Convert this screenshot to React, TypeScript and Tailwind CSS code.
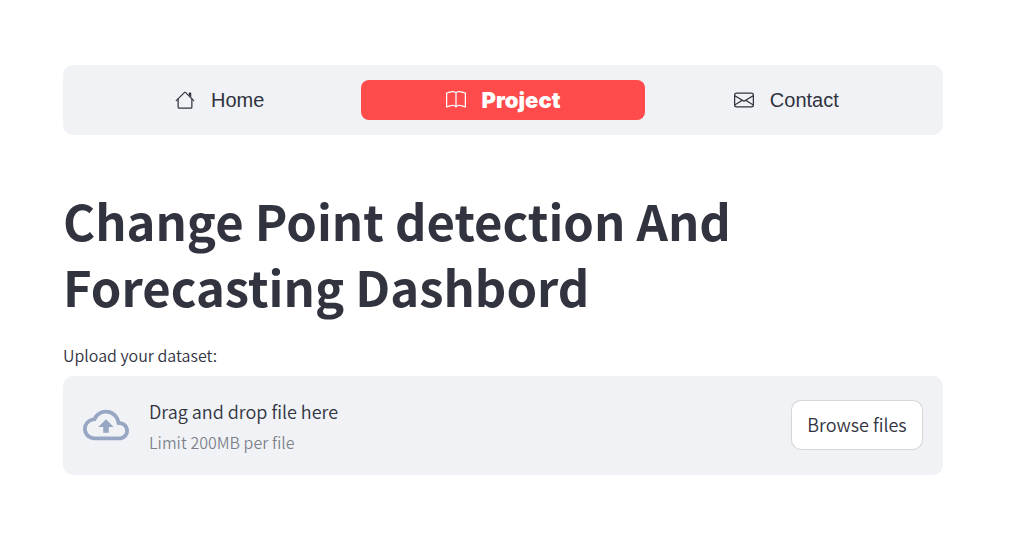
import { useRef } from 'react'
import { BsBook, BsEnvelope } from 'react-icons/bs'
import { MdOutlineCloudUpload } from 'react-icons/md'

function HouseIcon({ className }: { className?: string }) {
  return (
    <svg viewBox="0 0 16 16" fill="currentColor" fillRule="evenodd" className={className} aria-hidden="true">
      <path d="M2 13.5V7h1v6.5a.5.5 0 0 0 .5.5h9a.5.5 0 0 0 .5-.5V7h1v6.5a1.5 1.5 0 0 1-1.5 1.5h-9A1.5 1.5 0 0 1 2 13.5zm11-11V6l-2-2V2.5a.5.5 0 0 1 .5-.5h1a.5.5 0 0 1 .5.5z" />
      <path d="M7.293 1.5a1 1 0 0 1 1.414 0l6.647 6.646a.5.5 0 0 1-.708.708L8 2.207 1.354 8.854a.5.5 0 1 1-.708-.708L7.293 1.5z" />
    </svg>
  )
}

const items = [
  { label: 'Home', Icon: HouseIcon, active: false },
  { label: 'Project', Icon: BsBook, active: true },
  { label: 'Contact', Icon: BsEnvelope, active: false },
]

function NavMenu() {
  return (
    <nav className="rounded-[10px] bg-[#f0f2f6] p-[15px] font-['Liberation_Sans',Arial,sans-serif]">
      <ul className="grid grid-cols-3">
        {items.map(({ label, Icon, active }) => (
          <li key={label}>
            <a
              href={`#${label.toLowerCase()}`}
              aria-current={active ? 'page' : undefined}
              className={
                active
                  ? "flex h-10 items-center justify-center gap-4 rounded-lg bg-[#ff4b4b] font-['Inter',sans-serif] text-[22px] font-black text-white"
                  : 'flex h-10 items-center justify-center gap-4 rounded-lg text-xl text-[#31333f]'
              }
            >
              <Icon className="size-5 shrink-0" />
              {label}
            </a>
          </li>
        ))}
      </ul>
    </nav>
  )
}

function FileUploader() {
  const input = useRef<HTMLInputElement>(null)
  return (
    <div className="font-[350]">
      <label htmlFor="dataset" className="block text-base leading-6">
        Upload your dataset:
      </label>
      <section className="mt-[9px] flex items-center rounded-[10px] bg-[#f0f2f6] px-5 pt-4 pb-[18px]">
        <MdOutlineCloudUpload className="mr-5 size-[46px] shrink-0 text-[#97a6c3]" />
        <div className="mr-auto flex flex-col pt-1">
          <span className="text-lg leading-[31px]">Drag and drop file here</span>
          <small className="text-base leading-[30px] text-[#31333f]/60">Limit 200MB per file</small>
        </div>
        <input ref={input} id="dataset" type="file" className="hidden" />
        <button
          type="button"
          onClick={() => input.current?.click()}
          className="h-[50px] min-w-[132px] rounded-[10px] border border-[#31333f]/20 bg-white px-[15px] pb-0.5 text-lg"
        >
          Browse files
        </button>
      </section>
    </div>
  )
}

export default function App() {
  return (
    <main className="min-h-screen bg-white pt-[65px] pr-[70px] pb-16 pl-[63px] font-['Noto_Sans_CJK_SC',sans-serif] text-[#31333f]">
      <NavMenu />
      <h1 className="mt-[52px] mb-6 max-w-[760px] text-[49px] leading-[66px] font-bold">
        Change Point detection And Forecasting Dashbord
      </h1>
      <FileUploader />
    </main>
  )
}
